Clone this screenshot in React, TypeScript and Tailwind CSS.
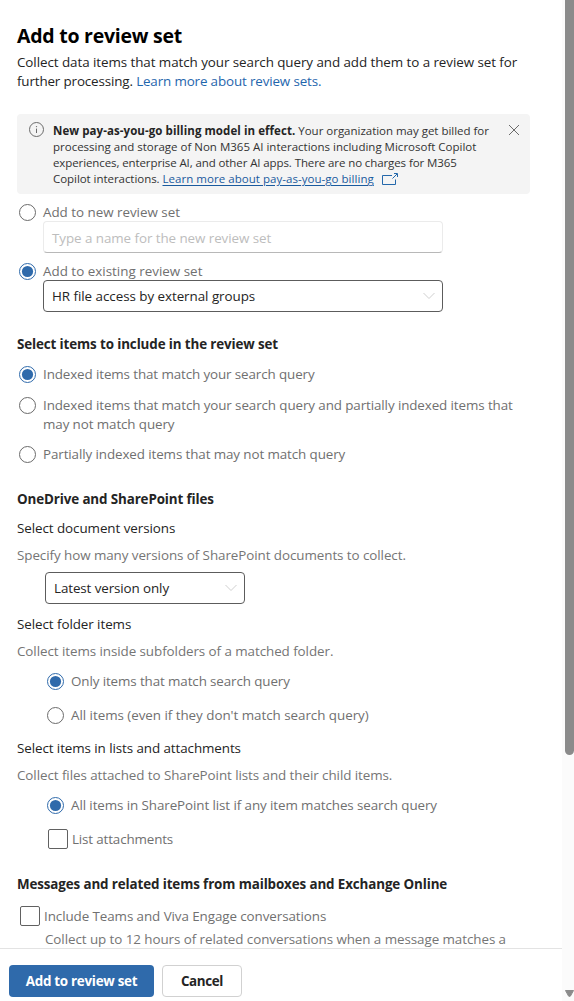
import type { ReactNode } from "react";

function Radio({ checked = false }: { checked?: boolean }) {
  return (
    <svg className="mt-0.5 h-[17px] w-[17px] shrink-0" viewBox="0 0 17 17" fill="none">
      <circle cx="8.5" cy="8.5" r="8" stroke={checked ? "#2f6aab" : "#6b6b6b"} />
      {checked && <circle cx="8.5" cy="8.5" r="5.6" fill="#2f6aab" />}
    </svg>
  );
}

function RadioRow({ checked, className = "", children }: { checked?: boolean; className?: string; children: ReactNode }) {
  return (
    <label className={`flex gap-[7px] text-[#707070] ${className}`}>
      <Radio checked={checked} />
      <span className="mt-px -mb-px">{children}</span>
    </label>
  );
}

function CheckRow({ className = "", children }: { className?: string; children: ReactNode }) {
  return (
    <label className={`flex h-5 items-center gap-1 leading-5 text-[#707070] ${className}`}>
      <span className="h-5 w-5 shrink-0 rounded-xs border border-[#616161]" />
      <span>{children}</span>
    </label>
  );
}

function Select({ className = "", children }: { className?: string; children: ReactNode }) {
  return (
    <div className={`flex h-8 items-center justify-between rounded-sm border border-[#5c5c5c] pr-[7px] pl-2 text-[#242424] ${className}`}>
      <span>{children}</span>
      <svg className="h-2 w-3" viewBox="0 0 12 8" fill="none">
        <path d="M0.5 1 L6 6.5 L11.5 1" stroke="#cfcfcf" />
      </svg>
    </div>
  );
}

function Heading({ className = "", children }: { className?: string; children: ReactNode }) {
  return <h2 className={`h-5 leading-5 font-bold tracking-[-0.12px] text-[#242424] ${className}`}>{children}</h2>;
}

export default function App() {
  return (
    <div className="flex h-[1001px] w-[574px] overflow-hidden bg-white font-['Open_Sans',sans-serif] text-[13.4px] leading-[19px] tracking-[-0.065px] whitespace-nowrap">
      <div className="flex w-[562px] shrink-0 flex-col">
        <main className="h-[948px] overflow-hidden pt-[22px] pl-[17px]">
          <h1 className="h-7 text-[19.5px] leading-7 font-bold tracking-[-0.25px] text-black">Add to review set</h1>
          <p className="mt-[3px] text-[#242424]">
            Collect data items that match your search query and add them to a review set for
            <br />
            <span className="tracking-[-0.14px]">
              further processing. <a className="text-[#1f66ad]">Learn more about review sets.</a>
            </span>
          </p>

          <section className="mt-[23px] flex h-20 w-[513px] rounded-sm bg-[#f4f4f4] pt-2 pl-[12px] text-[11.5px] leading-4 tracking-[-0.03px] text-[#333333]">
            <svg className="h-[15px] w-[15px] shrink-0" viewBox="0 0 15 15" fill="none">
              <circle cx="7.5" cy="7.5" r="7" stroke="#6b6b6b" />
              <path d="M7.5 6.6 V11" stroke="#6b6b6b" />
              <circle cx="7.5" cy="4.6" r="0.7" fill="#6b6b6b" />
            </svg>
            <p className="mt-px ml-[9px] w-[440px] shrink-0">
              <strong className="font-bold tracking-[0.07px] text-[#242424]">New pay-as-you-go billing model in effect.</strong>{" "}
              <span className="tracking-[-0.02px]">Your organization may get billed for</span>
              <br />
              <span className="tracking-normal">processing and storage of Non M365 AI interactions including Microsoft Copilot</span>
              <br />
              <span className="tracking-[-0.1px]">experiences, enterprise AI, and other AI apps. There are no charges for M365</span>
              <br />
              <span className="tracking-[-0.05px]">Copilot interactions. </span>
              <a className="tracking-[0.04px] text-[#1a5a9e] underline underline-offset-2">Learn more about pay-as-you-go billing</a>
              <svg className="ml-2 inline-block h-3 w-4 align-[-2px]" viewBox="0 0 16 12" fill="none" stroke="#2468ab">
                <path d="M10 2.5 H0.5 V11.5 H13.5 V6.5" />
                <path d="M10.5 5.5 L15 1 M12 0.5 H15.5 V4" />
              </svg>
            </p>
            <svg className="mt-[3px] ml-4 h-[10px] w-[10px] shrink-0" viewBox="0 0 10 10" fill="none">
              <path d="M0 0 L10 10 M10 0 L0 10" stroke="#6b6b6b" />
            </svg>
          </section>

          <div className="pt-2 pl-0.5">
            <RadioRow className="tracking-[-0.02px]">Add to new review set</RadioRow>
            <div className="ml-6 flex h-8 w-[400px] items-center rounded-sm border border-[#ebebeb] border-b-[#b8b8b8] pt-0.5 pl-2 text-[#bdbdbd]">
              Type a name for the new review set
            </div>
            <RadioRow checked className="mt-2 tracking-[0.01px]">Add to existing review set</RadioRow>
            <Select className="ml-6 w-[400px] tracking-[-0.045px]">HR file access by external groups</Select>
          </div>

          <Heading className="mt-[22px]">Select items to include in the review set</Heading>
          <div className="mt-[10px] pl-0.5">
            <RadioRow checked className="tracking-[-0.11px]">Indexed items that match your search query</RadioRow>
            <RadioRow className="mt-3 tracking-[-0.1px]">
              Indexed items that match your search query and partially indexed items that
              <br />
              may not match query
            </RadioRow>
            <RadioRow className="mt-[11px] tracking-[-0.1px]">Partially indexed items that may not match query</RadioRow>
          </div>

          <Heading className="mt-[26px]">OneDrive and SharePoint files</Heading>
          <h3 className="mt-[9px] leading-5 text-[#242424]">Select document versions</h3>
          <p className="mt-[7px] leading-5 text-[#757575]">Specify how many versions of SharePoint documents to collect.</p>
          <Select className="mt-[7px] ml-7 w-[200px] tracking-[-0.1px]">Latest version only</Select>

          <h3 className="mt-[10px] leading-5 text-[#242424]">Select folder items</h3>
          <p className="mt-[7px] leading-5 text-[#757575]">Collect items inside subfolders of a matched folder.</p>
          <div className="mt-[10px] pl-[30px]">
            <RadioRow checked className="tracking-[-0.11px]">Only items that match search query</RadioRow>
            <RadioRow className="mt-[15px] tracking-[-0.035px]">All items (even if they don't match search query)</RadioRow>
          </div>

          <h3 className="mt-[14px] leading-5 tracking-[-0.08px] text-[#242424]">Select items in lists and attachments</h3>
          <p className="mt-[7px] leading-5 text-[#757575]">Collect files attached to SharePoint lists and their child items.</p>
          <div className="mt-[10px] pl-[30px]">
            <RadioRow checked className="tracking-[-0.09px]">All items in SharePoint list if any item matches search query</RadioRow>
            <CheckRow className="mt-[15px] pl-px tracking-[-0.14px]">List attachments</CheckRow>
          </div>

          <Heading className="mt-[25px]">Messages and related items from mailboxes and Exchange Online</Heading>
          <CheckRow className="mt-3 pl-[3px] tracking-[-0.08px]">Include Teams and Viva Engage conversations</CheckRow>
          <p className="mt-[3px] pl-7 leading-5 text-[#757575]">
            Collect up to 12 hours of related conversations when a message matches a
          </p>
        </main>
        <footer className="flex h-[53px] shrink-0 gap-2 border-t border-[#e3e3e3] bg-white pt-4 pl-[9px] font-bold">
          <button className="h-8 w-[145px] rounded-sm bg-[#2f6aab] tracking-[-0.27px] text-white">Add to review set</button>
          <button className="h-8 w-20 rounded-sm border border-[#d1d1d1] tracking-[-0.37px] text-[#242424]">Cancel</button>
        </footer>
      </div>
      <div className="flex w-3 shrink-0 flex-col items-end justify-between bg-[#fbfbfb]">
        <div className="h-[755px] w-[9px] rounded-b-full bg-[#8b8b8b]" />
        <svg className="mb-1 h-[7px] w-[9px]" viewBox="0 0 9 7">
          <path d="M0.5 0.5 H8.5 L5.5 6 Q4.5 7 3.5 6 Z" fill="#8b8b8b" stroke="#8b8b8b" strokeLinejoin="round" />
        </svg>
      </div>
    </div>
  );
}
